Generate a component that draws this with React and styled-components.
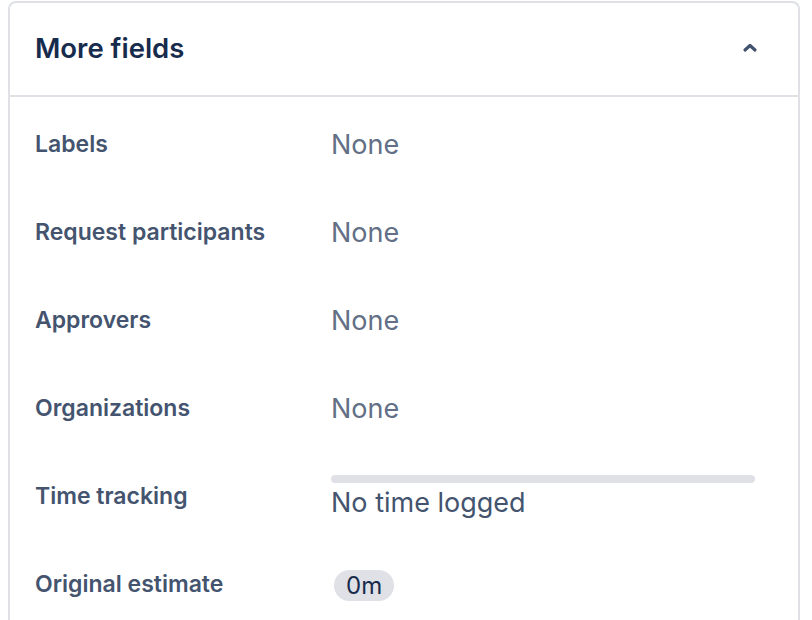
import React from 'react';
import styled, { createGlobalStyle } from 'styled-components';

const GlobalStyle = createGlobalStyle`
  body {
    margin: 0;
    padding: 1px 12px 0 8px;
    background: #FFFFFF;
    font-family: Inter, "Noto Sans", "Liberation Sans", sans-serif;
    -webkit-font-smoothing: antialiased;
  }
`;

const Card = styled.section`
  border: 2px solid #DFE1E6;
  border-bottom: 0;
  border-radius: 8px 8px 0 0;
  height: 640px;
  overflow: hidden;
  box-sizing: border-box;
`;

const Header = styled.header`
  display: flex;
  align-items: center;
  justify-content: space-between;
  height: 92px;
  padding: 0 38px 0 25px;
  border-bottom: 2px solid #DFE1E6;

  h2 {
    margin: 0 0 2px;
    font-size: 27.5px;
    font-weight: 600;
    color: #172B4D;
  }
`;

const Toggle = styled.button`
  border: 0;
  background: transparent;
  padding: 0;
  width: 20px;
  height: 20px;
  margin-bottom: 4px;
  display: flex;
  align-items: center;
  justify-content: center;
  cursor: pointer;
  color: #42526E;
`;

const Fields = styled.div`
  padding: 4px 0 0 25px;
`;

const Row = styled.div`
  display: grid;
  grid-template-columns: 296px 424px;
  align-items: center;
  height: 88px;
`;

const Label = styled.div`
  font-size: 23px;
  font-weight: 600;
  color: #44546F;
  margin-bottom: 2px;
`;

const Value = styled.div`
  font-size: 27px;
  line-height: 32px;
  color: ${(p) => (p.muted ? '#626F86' : '#44546F')};
`;

const Track = styled.div`
  height: 8px;
  border-radius: 4px;
  background: #DFE1E6;
  margin-bottom: 4px;
`;

const Badge = styled.span`
  display: inline-flex;
  align-items: center;
  height: 31px;
  padding: 0 12px;
  margin-left: 3px;
  border-radius: 16px;
  background: #DFE1E6;
  font-size: 24px;
  color: #172B4D;
`;

const fields = [
  { label: 'Labels', value: 'None' },
  { label: 'Request participants', value: 'None' },
  { label: 'Approvers', value: 'None' },
  { label: 'Organizations', value: 'None' },
];

export default function App() {
  return (
    <>
      <GlobalStyle />
      <Card>
        <Header>
          <h2>More fields</h2>
          <Toggle type="button" aria-label="Collapse">
            <svg width="16" height="12" viewBox="0 0 16 12">
              <path d="M3 9 L8 4.5 L13 9" fill="none" stroke="currentColor" strokeWidth="3.2" strokeLinecap="round" strokeLinejoin="round" />
            </svg>
          </Toggle>
        </Header>
        <Fields>
          {fields.map((f) => (
            <Row key={f.label}>
              <Label>{f.label}</Label>
              <Value muted>{f.value}</Value>
            </Row>
          ))}
          <Row>
            <Label>Time tracking</Label>
            <Value>
              <Track />
              No time logged
            </Value>
          </Row>
          <Row>
            <Label>Original estimate</Label>
            <div>
              <Badge>0m</Badge>
            </div>
          </Row>
        </Fields>
      </Card>
    </>
  );
}
